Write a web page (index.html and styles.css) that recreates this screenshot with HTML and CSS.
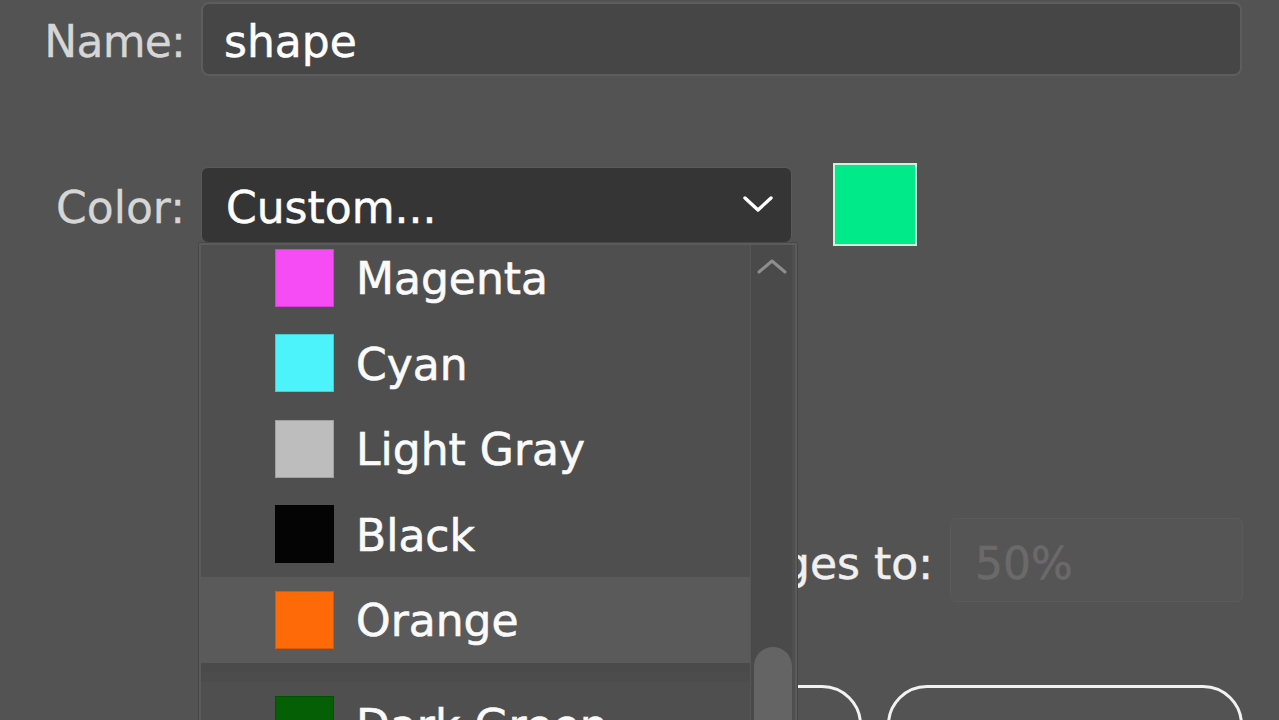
FILE: index.html
```html
<!DOCTYPE html>
<html lang="en">
<head>
<meta charset="utf-8">
<title>Layer Options</title>
<link rel="stylesheet" href="styles.css">
</head>
<body>
<div class="dialog">
  <div class="row row-name">
    <span class="lbl">Name:</span>
    <div class="field name-field"><span class="txt">shape</span></div>
  </div>

  <div class="row row-color">
    <span class="lbl">Color:</span>
    <div class="select">
      <span class="txt">Custom...</span>
      <svg class="chev" width="30" height="18" viewBox="0 0 30 18"><path d="M2 3 L15 15 L28 3" fill="none" stroke="#ffffff" stroke-width="3.4" stroke-linecap="round" stroke-linejoin="round"/></svg>
    </div>
    <div class="big-swatch"></div>
  </div>

  <div class="row row-dim">
    <span class="lbl lbl-dim">Dim Images to:</span>
    <div class="field dim-field"><span class="txt">50%</span></div>
  </div>

  <div class="row row-buttons">
    <div class="btn btn-cancel"><span class="txt">Cancel</span></div>
    <div class="btn btn-ok"><span class="txt">OK</span></div>
  </div>

  <div class="menu">
    <div class="menu-list">
      <div class="items">
        <div class="item"><span class="sw sw-magenta"></span><span class="itxt">Magenta</span></div>
        <div class="item"><span class="sw sw-cyan"></span><span class="itxt">Cyan</span></div>
        <div class="item"><span class="sw sw-lgray"></span><span class="itxt">Light Gray</span></div>
        <div class="item"><span class="sw sw-black"></span><span class="itxt">Black</span></div>
        <div class="item item-hl"><span class="sw sw-orange"></span><span class="itxt">Orange</span></div>
        <div class="sep"></div>
        <div class="item"><span class="sw sw-dgreen"></span><span class="itxt">Dark Green</span></div>
      </div>
    </div>
    <div class="track">
      <svg class="up" width="32" height="17" viewBox="0 0 32 17"><path d="M3 14 L16 3 L29 14" fill="none" stroke="#8e8e8e" stroke-width="3" stroke-linecap="round" stroke-linejoin="round"/></svg>
      <div class="thumb"></div>
    </div>
  </div>
</div>
</body>
</html>
```

FILE: styles.css
```css
html, body {
  margin: 0;
  padding: 0;
  height: 100%;
  overflow: hidden;
}

body {
  background: #535353;
  font-family: "DejaVu Sans", "Liberation Sans", sans-serif;
  font-size: 44px;
  line-height: 44px;
  color: #ffffff;
}

.dialog {
  position: relative;
  width: 1279px;
  height: 720px;
  padding-top: 2px;
  box-sizing: border-box;
}

.row {
  display: flex;
}

.lbl {
  width: 185px;
  text-align: right;
  color: #d6d6d6;
  flex: none;
  white-space: nowrap;
  -webkit-text-stroke: 0.3px #d6d6d6;
}

.txt {
  white-space: nowrap;
  -webkit-text-stroke: 0.5px currentColor;
}

/* Name row */
.row-name {
  height: 74px;
  align-items: center;
  padding-right: 37px;
}

.row-name .lbl {
  padding-top: 6px;
  letter-spacing: -0.8px;
}

.field {
  box-sizing: border-box;
  display: flex;
  align-items: center;
}

.name-field {
  flex: 1;
  height: 74px;
  margin-left: 16px;
  background: #464646;
  border: 2px solid #5d5d5d;
  border-radius: 8px;
  padding-left: 21px;
  padding-top: 6px;
}

/* Color row */
.row-color {
  margin-top: 87px;
  height: 83px;
  align-items: center;
}

.row-color .lbl {
  padding-top: 6px;
}

.select {
  box-sizing: border-box;
  width: 591px;
  height: 76px;
  margin-left: 16px;
  background: #353535;
  border: 1px solid #5a5a5a;
  border-radius: 7px;
  padding: 6px 18px 0 24px;
  display: flex;
  align-items: center;
  justify-content: space-between;
}

.select .chev {
  margin-top: -8px;
}

.big-swatch {
  box-sizing: border-box;
  width: 84px;
  height: 83px;
  margin-left: 41px;
  background: #00ea8a;
  border: 2px solid #c9f3dc;
}

/* Dim row */
.row-dim {
  margin-top: 272px;
  height: 84px;
  justify-content: flex-end;
  align-items: center;
  padding-right: 36px;
}

.lbl-dim {
  width: auto;
  color: #f0f0f0;
  margin-right: 17px;
  padding-top: 8px;
  -webkit-text-stroke: 0.5px #f0f0f0;
}

.dim-field {
  width: 293px;
  height: 84px;
  background: #555555;
  border: 1px solid #5a5a5a;
  border-radius: 6px;
  padding-left: 24px;
  padding-top: 8px;
  color: #6a6a6a;
}

/* Buttons */
.row-buttons {
  margin-top: 83px;
  justify-content: flex-end;
  padding-right: 36px;
}

.btn {
  box-sizing: border-box;
  height: 90px;
  border: 3px solid #f2f2f2;
  border-radius: 40px;
  display: flex;
  justify-content: center;
  padding-top: 31px;
  color: #f2f2f2;
}

.btn-cancel {
  width: 330px;
  margin-right: 25px;
}

.btn-ok {
  width: 356px;
}

/* Popup menu (overlay) */
.menu {
  position: absolute;
  left: 199px;
  top: 243px;
  width: 598px;
  height: 500px;
  box-sizing: border-box;
  background: #4f4f4f;
  border: 2px solid #5b5b5b;
  border-bottom: none;
  box-shadow: -1px 0 0 #474747, 1px 0 0 #474747, 0 -1px 0 #474747;
  display: flex;
  padding-right: 3px;
  overflow: hidden;
}

.menu-list {
  width: 549px;
  flex: none;
  overflow: hidden;
}

.items {
  margin-top: -10px;
}

.item {
  height: 85.5px;
  display: flex;
  align-items: center;
  padding-left: 74px;
  box-sizing: border-box;
}

.item-hl {
  background: #5a5a5a;
}

.sw {
  width: 59px;
  height: 58px;
  flex: none;
  box-sizing: border-box;
  border: 1px solid rgba(0, 0, 0, 0.15);
}

.sw-magenta { background: #f64cf6; }
.sw-cyan { background: #4cf3fb; }
.sw-lgray { background: #bdbdbd; }
.sw-black { background: #040404; }
.sw-orange { background: #ff6a08; }
.sw-dgreen { background: #055f05; }

.itxt {
  margin-left: 22px;
  padding-top: 3px;
  color: #fafafa;
  white-space: nowrap;
  -webkit-text-stroke: 0.6px #fafafa;
}

.sep {
  height: 19.5px;
  background: #4c4c4c;
  border-top: 9px solid #4a4a4a;
  box-sizing: border-box;
}

.track {
  width: 42px;
  flex: none;
  box-sizing: border-box;
  background: #4a4a4a;
  border-left: 1px solid #565656;
  display: flex;
  flex-direction: column;
  align-items: center;
}

.track .up {
  margin-top: 13px;
  flex: none;
}

.thumb {
  width: 38px;
  height: 120px;
  margin-top: 372px;
  margin-left: 3px;
  flex: none;
  background: #646464;
  border-radius: 19px 19px 0 0;
}
```
